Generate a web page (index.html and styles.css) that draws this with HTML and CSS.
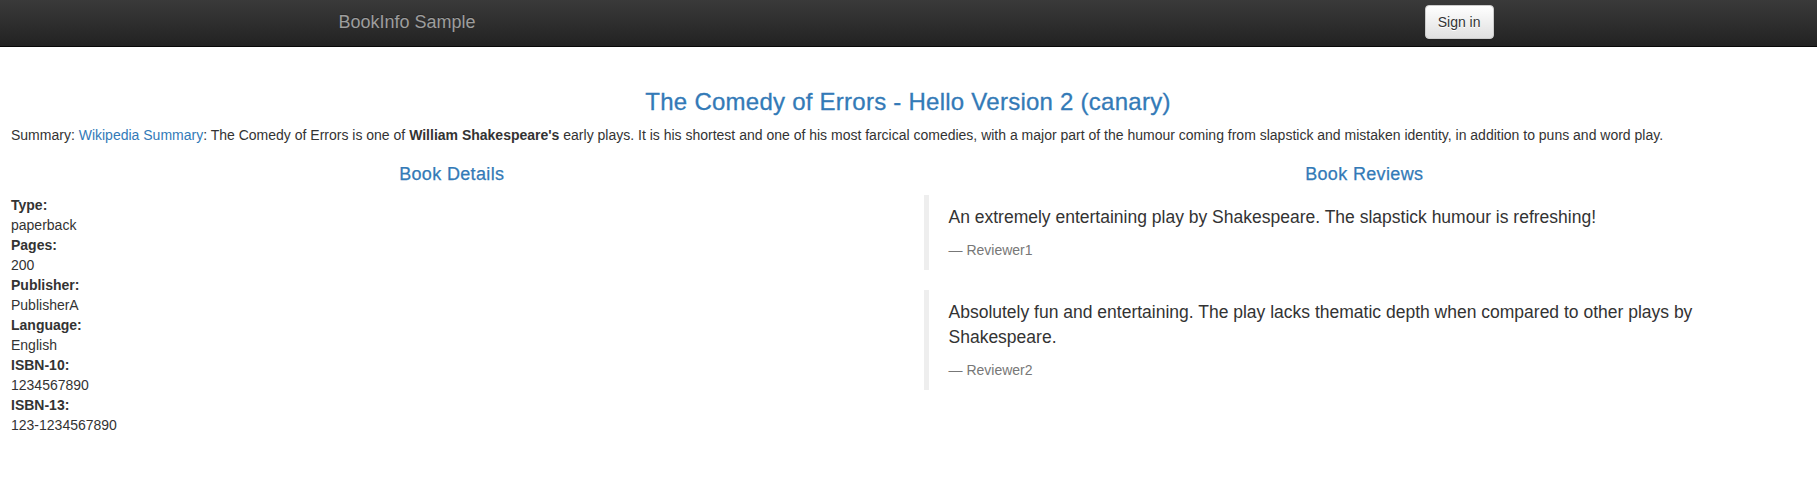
FILE: index.html
```html
<!DOCTYPE html>
<html lang="en">
<head>
<meta charset="utf-8">
<title>Simple Bookstore App</title>
<link rel="stylesheet" href="styles.css">
</head>
<body>
<nav class="navbar">
  <div class="navbar-container">
    <a class="navbar-brand" href="#">BookInfo Sample</a>
    <button type="button" class="btn-signin">Sign in</button>
  </div>
</nav>
<main class="page">
  <section class="intro">
    <h3 class="title">The Comedy of Errors - Hello Version 2 (canary)</h3>
    <p class="summary">Summary: <a href="#">Wikipedia Summary</a>: The Comedy of Errors is one of <b>William Shakespeare's</b> early plays. It is his shortest and one of his most farcical comedies, with a major part of the humour coming from slapstick and mistaken identity, in addition to puns and word play.</p>
  </section>
  <div class="columns">
    <section class="details">
      <h4 class="col-title">Book Details</h4>
      <dl class="detail-list">
        <dt>Type:</dt><dd>paperback</dd>
        <dt>Pages:</dt><dd>200</dd>
        <dt>Publisher:</dt><dd>PublisherA</dd>
        <dt>Language:</dt><dd>English</dd>
        <dt>ISBN-10:</dt><dd>1234567890</dd>
        <dt>ISBN-13:</dt><dd>123-1234567890</dd>
      </dl>
    </section>
    <section class="reviews">
      <h4 class="col-title">Book Reviews</h4>
      <blockquote class="review">
        <p>An extremely entertaining play by Shakespeare. The slapstick humour is refreshing!</p>
        <small>Reviewer1</small>
      </blockquote>
      <blockquote class="review">
        <p>Absolutely fun and entertaining. The play lacks thematic depth when compared to other plays by Shakespeare.</p>
        <small>Reviewer2</small>
      </blockquote>
    </section>
  </div>
</main>
</body>
</html>
```
FILE: styles.css
```css
* { box-sizing: border-box; }
html, body { margin: 0; padding: 0; }
body {
  font-family: "Liberation Sans", Arial, Helvetica, sans-serif;
  font-size: 14px;
  line-height: 1.42857143;
  color: #333;
  background: #fff;
}
a { color: #337ab7; text-decoration: none; }

.navbar {
  height: 47px;
  background-image: linear-gradient(to bottom, #3a3a3a 0, #222 100%);
  border-bottom: 1px solid #080808;
  margin-bottom: 22px;
}
.navbar-container {
  width: 1170px;
  margin: 0 auto;
  padding: 0 15px;
  display: flex;
  justify-content: space-between;
  align-items: flex-start;
}
.navbar-brand {
  display: block;
  padding: 12px 0 0;
  font-size: 18px;
  line-height: 20px;
  color: #9d9d9d;
  text-shadow: 0 -1px 0 rgba(0,0,0,.25);
}
.btn-signin {
  margin-top: 5px;
  margin-right: -15px;
  height: 34px;
  padding: 6px 12px;
  font-family: inherit;
  font-size: 14px;
  line-height: 20px;
  color: #333;
  background-image: linear-gradient(to bottom, #fff 0, #e0e0e0 100%);
  border: 1px solid #ccc;
  border-radius: 4px;
  text-shadow: 0 1px 0 #fff;
  box-shadow: inset 0 1px 0 rgba(255,255,255,.15), 0 1px 1px rgba(0,0,0,.075);
}

.page {
  display: flow-root;
  padding: 0 12px 0 11px;
}
.title {
  margin: 20px 0 10px;
  font-size: 24px;
  font-weight: 500;
  line-height: 1.1;
  letter-spacing: 0.25px;
  -webkit-text-stroke: 0.3px currentColor;
  text-align: center;
  color: #337ab7;
}
.summary {
  margin: 0 0 10px;
}
.columns {
  display: grid;
  grid-template-columns: 1fr 1fr;
  column-gap: 31px;
}
.col-title {
  margin: 10px 0 10px;
  font-size: 18px;
  font-weight: 500;
  line-height: 1.1;
  letter-spacing: 0.35px;
  -webkit-text-stroke: 0.25px currentColor;
  text-align: center;
  color: #337ab7;
}
.detail-list {
  margin: 0 0 20px;
}
.detail-list dt { font-weight: 700; }
.detail-list dd { margin: 0; }

.review {
  margin: 0 0 20px;
  padding: 10px 20px;
  border-left: 5px solid #eee;
  font-size: 17.5px;
}
.review p {
  margin: 0 0 10px;
}
.review small {
  display: block;
  font-size: 80%;
  line-height: 1.42857143;
  color: #777;
}
.review small::before {
  content: "\2014 \00A0";
}
```
